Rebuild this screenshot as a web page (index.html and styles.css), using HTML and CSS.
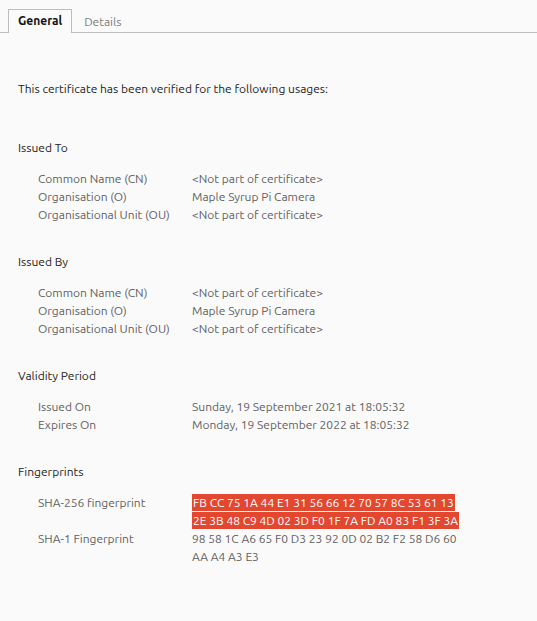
FILE: index.html
```html
<!DOCTYPE html>
<html>
<head>
<meta charset="utf-8">
<link rel="stylesheet" href="styles.css">
</head>
<body>
<div class="tabs">
  <div class="tab active">General</div>
  <div class="tab">Details</div>
</div>
<div class="page">
  <p class="intro">This certificate has been verified for the following usages:</p>

  <section class="group">
    <h2>Issued To</h2>
    <div class="rows">
      <div class="lbl">Common Name (CN)</div><div class="val">&lt;Not part of certificate&gt;</div>
      <div class="lbl">Organisation (O)</div><div class="val">Maple Syrup Pi Camera</div>
      <div class="lbl">Organisational Unit (OU)</div><div class="val">&lt;Not part of certificate&gt;</div>
    </div>
  </section>

  <section class="group">
    <h2>Issued By</h2>
    <div class="rows">
      <div class="lbl">Common Name (CN)</div><div class="val">&lt;Not part of certificate&gt;</div>
      <div class="lbl">Organisation (O)</div><div class="val">Maple Syrup Pi Camera</div>
      <div class="lbl">Organisational Unit (OU)</div><div class="val">&lt;Not part of certificate&gt;</div>
    </div>
  </section>

  <section class="group">
    <h2>Validity Period</h2>
    <div class="rows">
      <div class="lbl">Issued On</div><div class="val">Sunday, 19 September 2021 at 18:05:32</div>
      <div class="lbl">Expires On</div><div class="val">Monday, 19 September 2022 at 18:05:32</div>
    </div>
  </section>

  <section class="group">
    <h2>Fingerprints</h2>
    <div class="rows">
      <div class="lbl">SHA-256 fingerprint</div>
      <div class="val"><span class="sel">FB CC 75 1A 44 E1 31 56 66 12 70 57 8C 53 61 13 </span><br><span class="sel">2E 3B 48 C9 4D 02 3D F0 1F 7A FD A0 83 F1 3F 3A</span></div>
      <div class="lbl">SHA-1 Fingerprint</div>
      <div class="val">98 58 1C A6 65 F0 D3 23 92 0D 02 B2 F2 58 D6 60<br>AA A4 A3 E3</div>
    </div>
  </section>
</div>
</body>
</html>
```
FILE: styles.css
```css
html, body {
  margin: 0;
  padding: 0;
  background: #fafafa;
}
body {
  font-family: "Ubuntu", "Open Sans", "Noto Sans", sans-serif;
  font-size: 12px;
  color: #3d3d3d;
  width: 537px;
  height: 621px;
  overflow: hidden;
}
.tabs {
  display: flex;
  align-items: flex-end;
  height: 33px;
  padding-left: 8px;
  border-bottom: 1px solid #bdbdbd;
  box-sizing: border-box;
}
.tab {
  height: 23px;
  line-height: 22px;
  padding: 0 11px;
  color: #7a7a7a;
  margin-bottom: -1px;
  box-sizing: border-box;
  border: 1px solid transparent;
  border-bottom: none;
}
.tab.active {
  color: #111;
  font-weight: bold;
  background: #fafafa;
  border-color: #bdbdbd;
  height: 24px;
  padding: 0 9px;
}
.page {
  padding: 47px 18px 0 18px;
}
.intro {
  margin: 0;
  line-height: 18px;
  color: #222;
}
.group {
  margin-top: 41px;
}
.group + .group {
  margin-top: 29px;
}
.group h2 {
  margin: 0;
  font-size: 12px;
  font-weight: normal;
  line-height: 18px;
  color: #222;
}
.rows {
  display: grid;
  grid-template-columns: 154px auto;
  justify-content: start;
  margin-top: 13px;
  padding-left: 20px;
  line-height: 18px;
  color: #5f5f5f;
}
.val { color: #5f5f5f; }
.sel {
  background: #e2472f;
  color: #fff;
  padding: 2px 1px;
}
```
